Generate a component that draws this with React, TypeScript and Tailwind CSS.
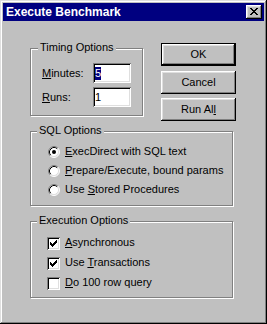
import type { ReactNode } from 'react'

const raised =
  'shadow-[inset_-1px_-1px_#000,inset_1px_1px_#fff,inset_-2px_-2px_#808080,inset_2px_2px_#dfdfdf]'
const sunken =
  'shadow-[inset_1px_1px_#808080,inset_-1px_-1px_#fff,inset_2px_2px_#000,inset_-2px_-2px_#dfdfdf]'

// tiny pixel glyphs, one string per row
const CHECK = ['......X', '.....XX', 'X...XXX', 'XX.XXX.', 'XXXXX..', '.XXX...', '..X....']
const CLOSE_X = ['XX....XX', '.XX..XX.', '..XXXX..', '...XX...', '..XXXX..', '.XX..XX.', 'XX....XX']

function Pixels({ rows, x, y }: { rows: string[]; x: number; y: number }) {
  return (
    <>
      {rows.flatMap((row, r) =>
        row.split('').map((c, i) =>
          c === 'X' ? <rect key={`${r}-${i}`} x={x + i} y={y + r} width={1} height={1} fill="#000" /> : null,
        ),
      )}
    </>
  )
}

function CloseButton() {
  return (
    <div className={`h-[14px] w-[16px] bg-[#c0c0c0] ${raised}`}>
      <svg width="16" height="14" shapeRendering="crispEdges">
        <Pixels rows={CLOSE_X} x={4} y={3} />
      </svg>
    </div>
  )
}

function Radio({ checked }: { checked?: boolean }) {
  return (
    <svg width="12" height="12" className="mt-[3px] shrink-0">
      <circle cx="6" cy="6" r="5" fill="#fff" />
      <path d="M2.11 9.89 A5.5 5.5 0 0 1 9.89 2.11" stroke="#808080" fill="none" />
      <path d="M9.89 2.11 A5.5 5.5 0 0 1 2.11 9.89" stroke="#fff" fill="none" />
      <path d="M2.82 9.18 A4.5 4.5 0 0 1 9.18 2.82" stroke="#000" fill="none" />
      <path d="M9.18 2.82 A4.5 4.5 0 0 1 2.82 9.18" stroke="#dfdfdf" fill="none" />
      {checked && <circle cx="6" cy="6" r="2" fill="#000" />}
    </svg>
  )
}

function Check({ checked }: { checked?: boolean }) {
  return (
    <div className={`mt-[3px] h-[13px] w-[13px] shrink-0 bg-white ${sunken}`}>
      {checked && (
        <svg width="13" height="13" shapeRendering="crispEdges">
          <Pixels rows={CHECK} x={3} y={3} />
        </svg>
      )}
    </div>
  )
}

function Group({
  label,
  labelLeft,
  className,
  children,
}: {
  label: string
  labelLeft: string
  className: string
  children: ReactNode
}) {
  return (
    <div className={`relative border border-[#808080] shadow-[inset_1px_1px_#fff,1px_1px_#fff] ${className}`}>
      <span className={`absolute top-[-8px] bg-[#c0c0c0] px-[2px] ${labelLeft}`}>{label}</span>
      {children}
    </div>
  )
}

function Button({ children, isDefault }: { children: ReactNode; isDefault?: boolean }) {
  return (
    <div
      className={`flex h-[23px] w-[75px] items-center justify-center bg-[#c0c0c0] ${
        isDefault ? 'border border-black' : ''
      } ${raised}`}
    >
      <span>{children}</span>
    </div>
  )
}

const radios = [
  { pre: '', key: 'E', post: 'xecDirect with SQL text', checked: true },
  { pre: '', key: 'P', post: 'repare/Execute, bound params' },
  { pre: 'Use ', key: 'S', post: 'tored Procedures' },
]

const checks = [
  { pre: '', key: 'A', post: 'synchronous', checked: true },
  { pre: 'Use ', key: 'T', post: 'ransactions', checked: true },
  { pre: '', key: 'D', post: 'o 100 row query' },
]

export default function App() {
  return (
    <div
      className={`h-[324px] w-[267px] bg-[#c0c0c0] p-[3px] font-['Liberation_Sans',Arial,sans-serif] text-[11px] leading-[13px] text-black shadow-[inset_-1px_-1px_#000,inset_1px_1px_#dfdfdf,inset_-2px_-2px_#808080,inset_2px_2px_#fff]`}
    >
      <div className="flex h-[18px] items-center justify-between bg-[#000080] pl-[3px] pr-[2px]">
        <span className="text-[12px] font-bold text-white">Execute Benchmark</span>
        <CloseButton />
      </div>

      <div className="pl-[27px] pt-[22px]">
        <div className="flex items-start">
          <Group label="Timing Options" labelLeft="left-[7px]" className="mt-[5px] h-[68px] w-[113px]">
            <div className="flex flex-col gap-[4px] pl-[11px] pt-[14px]">
              <div className="flex h-[20px] items-center">
                <span className="w-[51px]">
                  <u>M</u>inutes:
                </span>
                <div className={`flex h-[20px] w-[38px] items-center bg-white pl-[2px] ${sunken}`}>
                  <span className="bg-[#000080] text-white">5</span>
                </div>
              </div>
              <div className="flex h-[20px] items-center">
                <span className="w-[51px]">
                  <u>R</u>uns:
                </span>
                <div className={`flex h-[20px] w-[38px] items-center bg-white pl-[2px] ${sunken}`}>
                  <span>1</span>
                </div>
              </div>
            </div>
          </Group>

          <div className="ml-[18px] flex flex-col">
            <Button isDefault>OK</Button>
            <div className="mt-[5px]">
              <Button>Cancel</Button>
            </div>
            <div className="mt-[4px]">
              <Button>
                Run Al<u>l</u>
              </Button>
            </div>
          </div>
        </div>

        <Group label="SQL Options" labelLeft="left-[6px]" className="mt-[10px] h-[75px] w-[203px]">
          <div className="flex flex-col pl-[17px] pt-[11px]">
            {radios.map((r) => (
              <div key={r.post} className="flex h-[19px] items-start">
                <Radio checked={r.checked} />
                <span className="ml-[5px] mt-[2px] whitespace-nowrap">
                  {r.pre}
                  <u>{r.key}</u>
                  {r.post}
                </span>
              </div>
            ))}
          </div>
        </Group>

        <Group label="Execution Options" labelLeft="left-[6px]" className="mt-[15px] h-[77px] w-[203px]">
          <div className="flex flex-col pl-[16px] pt-[12px]">
            {checks.map((c) => (
              <div key={c.post} className="flex h-[20px] items-start">
                <Check checked={c.checked} />
                <span className="ml-[5px] mt-[2px] whitespace-nowrap">
                  {c.pre}
                  <u>{c.key}</u>
                  {c.post}
                </span>
              </div>
            ))}
          </div>
        </Group>
      </div>
    </div>
  )
}
